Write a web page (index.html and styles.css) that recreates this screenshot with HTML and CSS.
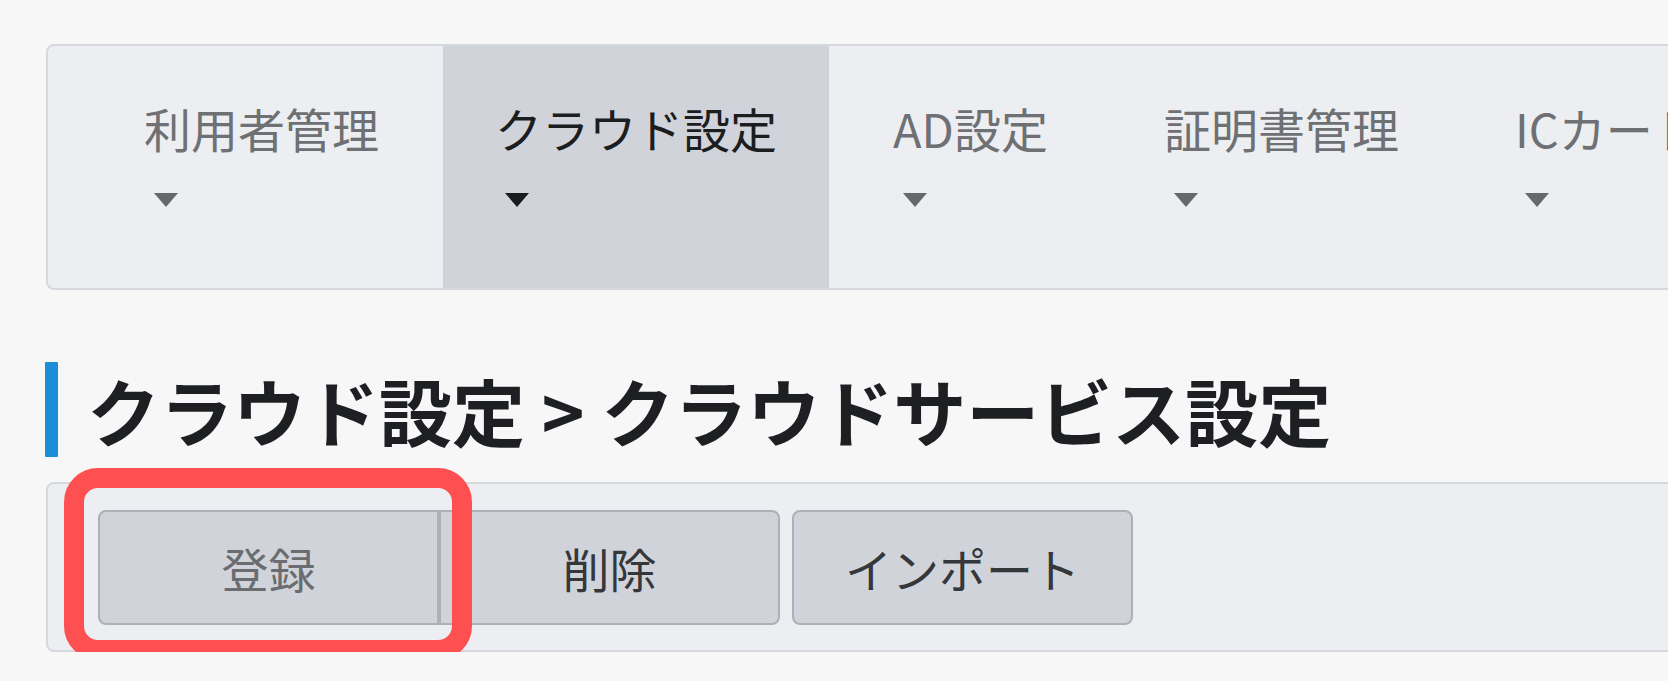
FILE: index.html
```html
<!DOCTYPE html>
<html lang="ja">
<head>
<meta charset="utf-8">
<title>クラウドサービス設定</title>
<link rel="stylesheet" href="styles.css">
</head>
<body>
<div class="page">
  <nav class="nav">
    <ul class="nav-list">
      <li class="tab"><span class="tab-label">利用者管理</span><span class="caret"></span></li>
      <li class="tab tab-active"><span class="tab-label">クラウド設定</span><span class="caret"></span></li>
      <li class="tab"><span class="tab-label">AD設定</span><span class="caret"></span></li>
      <li class="tab"><span class="tab-label">証明書管理</span><span class="caret"></span></li>
      <li class="tab"><span class="tab-label">ICカード管理</span><span class="caret"></span></li>
    </ul>
  </nav>

  <h1 class="page-title"><span class="title-bar"></span><span class="title-text">クラウド設定 &gt; クラウドサービス設定</span></h1>

  <div class="toolbar-wrap">
    <div class="toolbar">
      <div class="btn-group">
        <button class="btn btn-first btn-muted">登録</button>
        <button class="btn btn-last">削除</button>
      </div>
      <button class="btn">インポート</button>
    </div>
    <div class="highlight"></div>
  </div>
</div>
</body>
</html>
```

FILE: styles.css
```css
html, body {
  margin: 0;
  padding: 0;
  overflow: hidden;
  background: #f7f7f7;
}

body {
  font-family: "Noto Sans CJK JP", "Noto Sans", sans-serif;
  color: #333;
}

.page {
  width: 1760px;
  margin: 44px 0 0 46px;
}

/* ---------- navigation ---------- */
.nav {
  background: #eceef1;
  border: 2px solid #d5d9de;
  border-radius: 8px;
  overflow: hidden;
}

.nav-list {
  list-style: none;
  margin: 0;
  padding: 0 0 0 44px;
  display: flex;
  gap: 12px;
}

.tab {
  display: flex;
  flex-direction: column;
  align-items: flex-start;
  padding: 50px 52px 81px;
  color: #6e7073;
  font-size: 47px;
  white-space: nowrap;
}

.tab-label {
  line-height: 64px;
}

.caret {
  width: 0;
  height: 0;
  margin: 33px 0 0 10px;
  border-left: 12px solid transparent;
  border-right: 12px solid transparent;
  border-top: 14px solid #66686b;
}

.tab-active {
  background: #d0d4da;
  color: #1c1d1f;
}

.tab-active .caret {
  border-top-color: #1a1b1d;
}

/* ---------- title ---------- */
.page-title {
  display: flex;
  align-items: center;
  gap: 29px;
  height: 95px;
  margin: 72px 0 25px -1px;
  font-size: 73px;
  font-weight: 700;
  color: #1d1f22;
  line-height: 1;
  white-space: nowrap;
}

.title-bar {
  align-self: stretch;
  width: 13px;
  background: #1a8fd8;
  border-radius: 1px;
}

/* ---------- toolbar ---------- */
.toolbar-wrap {
  position: relative;
}

.toolbar {
  display: flex;
  gap: 12px;
  padding: 26px 50px 25px 50px;
  background: #eceef1;
  border: 2px solid #d5d9de;
  border-radius: 8px;
}

.btn-group {
  display: flex;
}

.btn {
  box-sizing: border-box;
  width: 341px;
  height: 115px;
  padding: 0;
  background: #d0d4da;
  border: 2px solid #adb1b7;
  border-radius: 8px;
  font-family: inherit;
  font-size: 47px;
  color: #35373a;
}

.btn-first {
  border-top-right-radius: 0;
  border-bottom-right-radius: 0;
}

.btn-last {
  border-top-left-radius: 0;
  border-bottom-left-radius: 0;
}

.btn-muted {
  color: #6a6c6f;
}

/* ---------- annotation ---------- */
.highlight {
  position: absolute;
  left: 18px;
  top: -14px;
  width: 408px;
  height: 192px;
  box-sizing: border-box;
  border: 20px solid #fe5050;
  border-radius: 34px;
}
```
